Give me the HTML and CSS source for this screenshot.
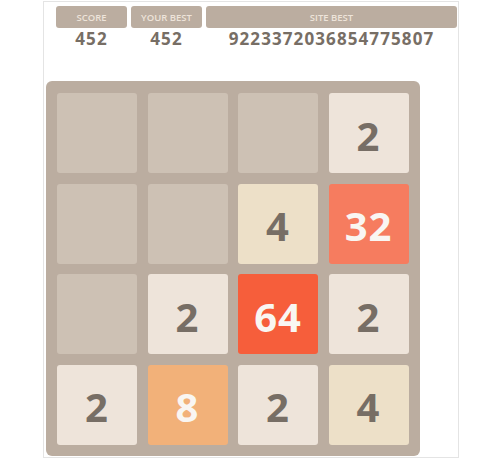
FILE: index.html
```html
<!DOCTYPE html>
<html>
<head>
<meta charset="utf-8">
<link rel="stylesheet" href="styles.css">
</head>
<body>
<div class="wrap">
  <div class="scores">
    <div class="score-col small">
      <div class="label">Score</div>
      <div class="value">452</div>
    </div>
    <div class="score-col small">
      <div class="label">Your Best</div>
      <div class="value">452</div>
    </div>
    <div class="score-col wide">
      <div class="label">Site Best</div>
      <div class="value">9223372036854775807</div>
    </div>
  </div>
  <div class="board">
    <div class="cell"></div>
    <div class="cell"></div>
    <div class="cell"></div>
    <div class="cell t2">2</div>
    <div class="cell"></div>
    <div class="cell"></div>
    <div class="cell t4">4</div>
    <div class="cell t32">32</div>
    <div class="cell"></div>
    <div class="cell t2">2</div>
    <div class="cell t64">64</div>
    <div class="cell t2">2</div>
    <div class="cell t2">2</div>
    <div class="cell t8">8</div>
    <div class="cell t2">2</div>
    <div class="cell t4">4</div>
  </div>
</div>
</body>
</html>
```

FILE: styles.css
```css
html, body {
  margin: 0;
  padding: 0;
  background: #ffffff;
}

body {
  font-family: "Open Sans", "DejaVu Sans", sans-serif;
  color: #776e65;
}

.wrap {
  box-sizing: border-box;
  margin: 1px 0 0 43px;
  width: 416px;
  height: 457px;
  border: 1px solid #e4e4e4;
  padding: 4px 1px 0 2px;
}

.scores {
  display: flex;
  gap: 4px;
  margin-left: 10px;
}

.score-col {
  display: flex;
  flex-direction: column;
  align-items: stretch;
}

.score-col.small {
  width: 71px;
}

.score-col.wide {
  flex: 1;
}

.label {
  height: 22px;
  background: #bbada0;
  border-radius: 3px;
  color: #eee4da;
  font-size: 9.5px;
  font-weight: 600;
  text-transform: uppercase;
  text-align: center;
  line-height: 23px;
}

.value {
  text-align: center;
  font-size: 17px;
  font-weight: 700;
  letter-spacing: 1.1px;
  line-height: 22px;
  color: #776e65;
}

.board {
  margin-top: 31px;
  width: 374px;
  height: 375px;
  box-sizing: border-box;
  background: #bbada0;
  border-radius: 6px;
  padding: 12px 11px 11px 11px;
  display: grid;
  grid-template-columns: repeat(4, 80px);
  grid-template-rows: repeat(4, 80px);
  column-gap: 10.5px;
  row-gap: 10.5px;
}

.cell {
  background: #cdc1b4;
  border-radius: 3px;
  display: flex;
  align-items: center;
  justify-content: center;
  font-size: 40px;
  font-weight: 700;
  letter-spacing: 1px;
  padding-top: 4px;
  box-sizing: border-box;
}

.t2 { background: #eee4da; color: #776e65; }
.t4 { background: #ede0c8; color: #776e65; }
.t8 { background: #f2b179; color: #f9f6f2; }
.t32 { background: #f67c5f; color: #f9f6f2; }
.t64 { background: #f65e3b; color: #f9f6f2; }
```
